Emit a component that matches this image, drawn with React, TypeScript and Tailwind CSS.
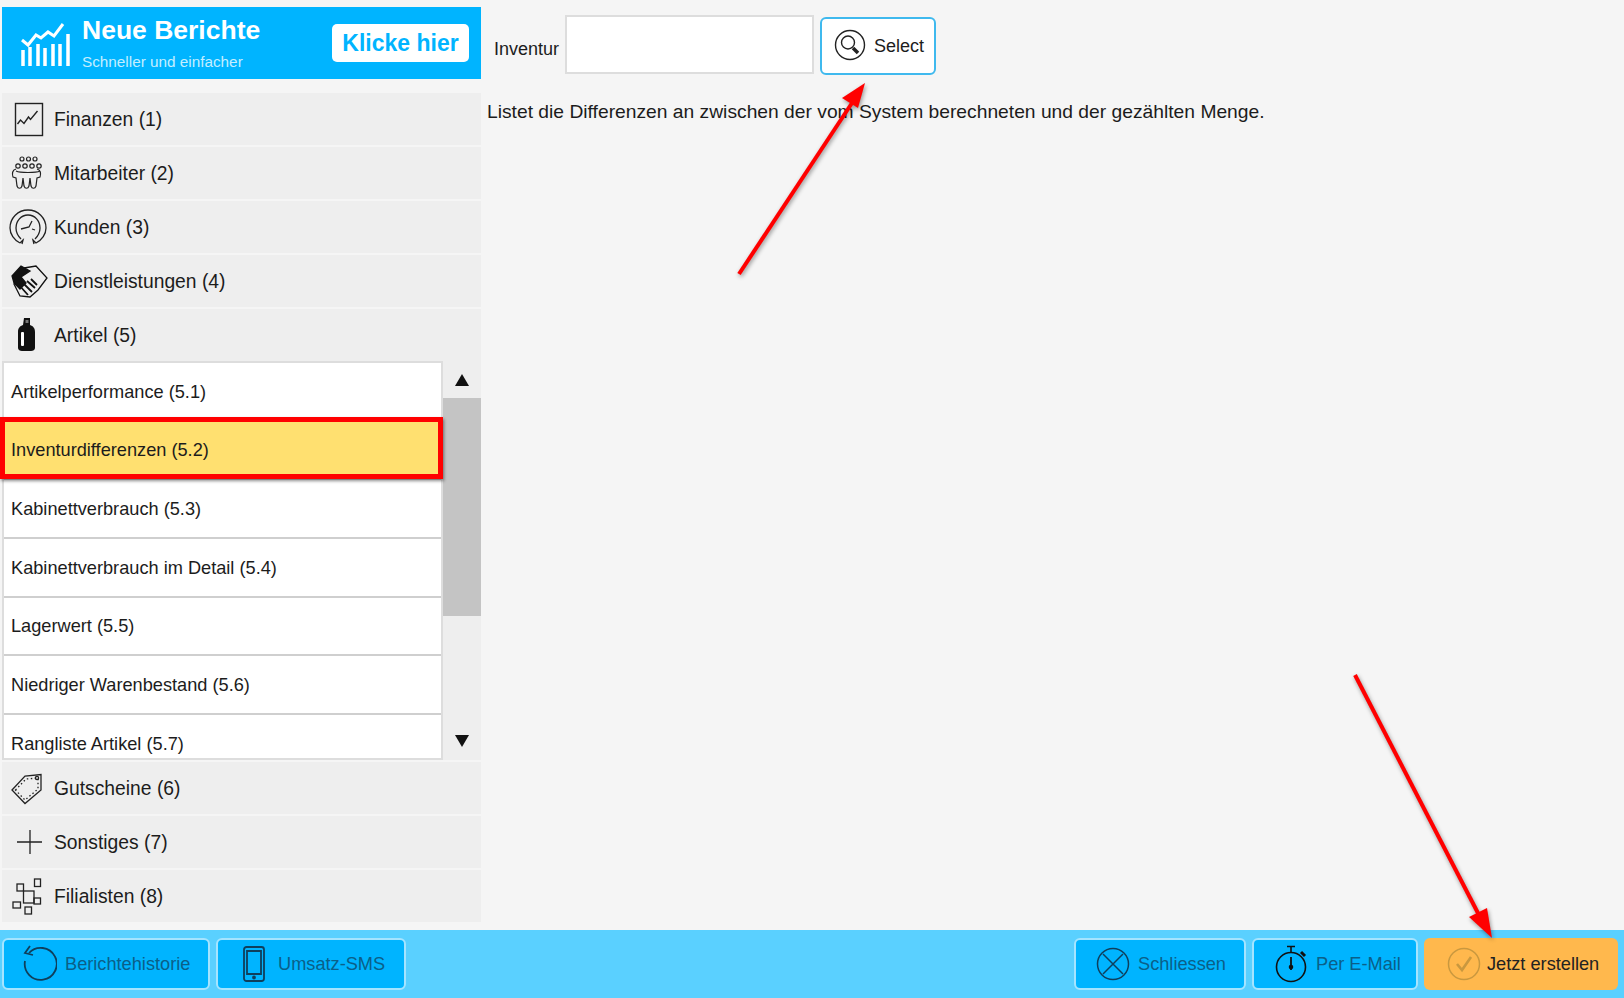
import type { ReactNode } from 'react'

const font = "[font-family:'Liberation_Sans',Arial,sans-serif]"

function FinanzenIcon() {
  return (
    <svg width="44" height="44" viewBox="0 0 44 44" fill="none" stroke="#222">
      <rect x="9.5" y="6.5" width="27" height="32" strokeWidth="1.4" />
      <path d="M11.5 27l3-4 3.5 3.5 4.5-6.5 2 2.5 7-8.5" strokeWidth="1.4" />
    </svg>
  )
}

function MitarbeiterIcon() {
  return (
    <svg width="44" height="44" viewBox="0 0 44 44" fill="none" stroke="#222" strokeWidth="1.2">
      <circle cx="16" cy="8" r="2" />
      <circle cx="22.5" cy="8" r="2" />
      <circle cx="29" cy="8" r="2" />
      <circle cx="12" cy="15" r="2.2" />
      <circle cx="19" cy="15" r="2.2" />
      <circle cx="26" cy="15" r="2.2" />
      <circle cx="33" cy="15" r="2.2" />
      <path d="M10 18c-4 1-4 5-3 8l3 1 1 8c1 3 4 3 5 0l1-8 1 8c1 3 4 3 5 0l1-8 1 8c1 3 4 3 5 0l1-8 3-1c1-3 1-7-3-8" />
      <path d="M10 20c4 2 20 2 24 0" />
    </svg>
  )
}

function KundenIcon() {
  return (
    <svg width="44" height="44" viewBox="0 0 44 44" fill="none" stroke="#222" strokeWidth="1.3">
      <path d="M14 38c-6-3-10-9-10-15C4 13 12 5 22 5s18 8 18 18c0 6-4 12-10 15l-3-3 1 4" />
      <path d="M14 38l3-3-1 4" />
      <path d="M15 34c-3-3-5-7-5-11 0-7 5-13 12-13s12 6 12 13c0 4-2 8-5 11" />
      <path d="M15 24l8-2 3-6M26 24l3 1" />
    </svg>
  )
}

function HandsIcon() {
  return (
    <svg width="44" height="44" viewBox="0 0 44 44" fill="none" stroke="#111" strokeWidth="1.3">
      <path d="M18 9l12-2 11 12-9 12-8 7-10-1-6-12z" />
      <path d="M6 17l9-10 9 5-9 6 5 6-6 6-6-6z" fill="#111" />
      <path d="M13 26l9 10M17 24l9 9M21 22l8 7M25 20l6 6" strokeWidth="1.8" />
    </svg>
  )
}

function BottleIcon() {
  return (
    <svg width="44" height="44" viewBox="0 0 44 44">
      <path d="M18 5h6v7c3 1 5 3 5 7v16c0 2-2 3-4 3h-9c-2 0-4-1-4-3V19c0-4 2-6 5-7z" fill="#111" />
      <rect x="15" y="19" width="3" height="14" rx="1" fill="#fff" />
      <rect x="19.5" y="7" width="3" height="3" fill="#777" />
    </svg>
  )
}

function TagIcon() {
  return (
    <svg width="44" height="44" viewBox="0 0 44 44" fill="none" stroke="#222" strokeWidth="1.3">
      <path d="M6 24L19 10l16-1.5V24L19 37.5z" />
      <path d="M9.5 24L20 13l12-1v11L19 34z" strokeDasharray="1.5 2.5" />
      <circle cx="31" cy="12" r="1.6" />
    </svg>
  )
}

function PlusIcon() {
  return (
    <svg width="44" height="44" viewBox="0 0 44 44" stroke="#222" strokeWidth="1.3">
      <path d="M11 22h25M24 10v24" />
    </svg>
  )
}

function BranchesIcon() {
  return (
    <svg width="44" height="44" viewBox="0 0 44 44" fill="none" stroke="#222" strokeWidth="1.3">
      <rect x="28.5" y="5" width="6" height="7.5" />
      <rect x="11" y="10" width="6.5" height="7" />
      <rect x="17.5" y="17" width="10.5" height="12" />
      <rect x="28" y="24" width="6.5" height="6" />
      <rect x="7" y="28" width="7.5" height="6" />
      <rect x="19" y="33" width="6.5" height="7" />
    </svg>
  )
}

function BannerIcon() {
  return (
    <svg width="52" height="46" viewBox="0 0 52 46" fill="none" stroke="#fff">
      <path d="M2 20l6 5 8-10 5 3 7-6 6 4 9-12" strokeWidth="3" />
      <path d="M3 46V30M10 46V27M18 46V24M25 46V28M33 46V24M40 46V24M48 46V14" strokeWidth="3.5" />
    </svg>
  )
}

function MenuRow({ icon, label }: { icon: ReactNode; label: string }) {
  return (
    <div className="flex h-[52px] items-center bg-[#eeeeee]">
      <div className="ml-[4px] mr-[4px] flex h-[44px] w-[44px] shrink-0">{icon}</div>
      <span className="pt-[2px] text-[19.3px] text-[#1c1c1c]">{label}</span>
    </div>
  )
}

function SubRow({ label, selected }: { label: string; selected?: boolean }) {
  return (
    <div
      className={`flex h-[58.7px] shrink-0 items-center border-b-2 border-[#cfcfcf] pl-[7px] pt-[2px] text-[18.2px] text-[#1c1c1c] ${
        selected ? 'bg-[#ffe070]' : 'bg-white'
      }`}
    >
      {label}
    </div>
  )
}

function FooterButton({ icon, label, className }: { icon: ReactNode; label: string; className: string }) {
  return (
    <button className={`flex h-[52px] items-center rounded-[6px] border-2 border-[#a5e4ff] bg-[#00b4ff] text-[18.2px] text-[#0b5f88] ${className}`}>
      {icon}
      <span className="pt-[2px]">{label}</span>
    </button>
  )
}

const subItems = [
  'Artikelperformance (5.1)',
  'Inventurdifferenzen (5.2)',
  'Kabinettverbrauch (5.3)',
  'Kabinettverbrauch im Detail (5.4)',
  'Lagerwert (5.5)',
  'Niedriger Warenbestand (5.6)',
  'Rangliste Artikel (5.7)',
]

export default function App() {
  return (
    <div className={`relative flex h-[998px] w-[1624px] flex-col overflow-hidden bg-[#f5f5f5] ${font}`}>
      <div className="flex h-[930px] shrink-0">
        {/* Sidebar */}
        <aside className="ml-[2px] w-[479px] shrink-0 pt-[7px]">
          <div className="flex h-[72px] items-center bg-[#00b4ff] pl-[18px] pr-[12px]">
            <BannerIcon />
            <div className="ml-[10px] flex-1 text-white">
              <div className="text-[26.5px] leading-[30px] font-bold">Neue Berichte</div>
              <div className="mt-[7px] text-[15.3px] leading-[20px] text-[#c4eeff]">Schneller und einfacher</div>
            </div>
            <div className="flex h-[38px] w-[137px] items-center justify-center rounded-[5px] bg-white text-[23px] font-bold text-[#00b4ff]">
              Klicke hier
            </div>
          </div>

          <div className="mt-[14px] flex flex-col gap-[2px]">
            <MenuRow icon={<FinanzenIcon />} label="Finanzen (1)" />
            <MenuRow icon={<MitarbeiterIcon />} label="Mitarbeiter (2)" />
            <MenuRow icon={<KundenIcon />} label="Kunden (3)" />
            <MenuRow icon={<HandsIcon />} label="Dienstleistungen (4)" />
            <MenuRow icon={<BottleIcon />} label="Artikel (5)" />
          </div>

          {/* Open group with its scrolling list */}
          <div className="relative flex h-[399px]">
            <div className="flex w-[441px] flex-col overflow-hidden border-2 border-[#dddddd] bg-white">
              {subItems.map((item) => (
                <SubRow key={item} label={item} selected={item.includes('5.2')} />
              ))}
            </div>
            <div className="flex w-[38px] flex-col items-center bg-[#eeeeee]">
              <div className="flex h-[37px] w-full items-center justify-center">
                <svg width="14" height="12" viewBox="0 0 14 12"><path d="M7 0l7 12H0z" fill="#111" /></svg>
              </div>
              <div className="h-[218px] w-full bg-[#c4c4c4]" />
              <div className="flex w-full flex-1 items-end justify-center pb-[13px]">
                <svg width="14" height="12" viewBox="0 0 14 12"><path d="M0 0h14L7 12z" fill="#111" /></svg>
              </div>
            </div>
            {/* Red annotation round the selected row */}
            <div className="absolute -left-[2px] top-[56px] h-[62px] w-[443px] border-[5px] border-[#ff0000] shadow-[1px_2px_3px_rgba(0,0,0,0.45)]" />
          </div>

          <div className="mt-[2px] flex flex-col gap-[2px]">
            <MenuRow icon={<TagIcon />} label="Gutscheine (6)" />
            <MenuRow icon={<PlusIcon />} label="Sonstiges (7)" />
            <MenuRow icon={<BranchesIcon />} label="Filialisten (8)" />
          </div>
        </aside>

        {/* Report parameters */}
        <main className="min-w-0 flex-1 pl-[6px] pt-[15px]">
          <div className="flex items-start pl-[7px]">
            <span className="mr-[6px] mt-[24px] text-[18px] leading-[20px] text-[#1c1c1c]">Inventur</span>
            <div className="h-[59px] w-[249px] border-2 border-[#dddddd] bg-white" />
            <button className="ml-[6px] mt-[2px] flex h-[58px] w-[116px] items-center rounded-[6px] border-2 border-[#3fb9ee] bg-white pl-[12px] text-[18px] text-[#1c1c1c]">
              <svg width="32" height="32" viewBox="0 0 32 32" fill="none" stroke="#222" className="mr-[8px] -mt-[2px]">
                <circle cx="16" cy="16" r="14.5" strokeWidth="1.4" />
                <circle cx="14" cy="13.5" r="6.5" strokeWidth="1.4" />
                <path d="M19 19l5 5" strokeWidth="3.5" />
              </svg>
              Select
            </button>
          </div>
          <p className="mt-[25px] text-[19.25px] leading-[24px] whitespace-nowrap text-[#1c1c1c]">
            Listet die Differenzen an zwischen der vom System berechneten und der gezählten Menge.
          </p>
        </main>
      </div>

      {/* Footer */}
      <footer className="flex h-[68px] items-center justify-between bg-[#5ad0ff] pl-[2px] pr-[6px]">
        <div className="flex gap-[6px]">
          <FooterButton
            className="w-[208px] pl-[17px]"
            label="Berichtehistorie"
            icon={
              <svg width="36" height="38" viewBox="0 0 36 38" fill="none" stroke="#0f3f5c" strokeWidth="1.8" className="mr-[8px]">
                <path d="M8 8a16 16 0 1 1-4 8" />
                <path d="M9 1L4 8l8 2" />
              </svg>
            }
          />
          <FooterButton
            className="w-[190px] pl-[25px]"
            label="Umsatz-SMS"
            icon={
              <svg width="22" height="36" viewBox="0 0 22 36" fill="none" stroke="#0f3f5c" strokeWidth="1.8" className="mr-[13px]">
                <rect x="1" y="1" width="20" height="34" rx="2.5" />
                <path d="M4 5h14v23H4z" />
                <circle cx="11" cy="31.5" r="1" fill="#0f3f5c" />
              </svg>
            }
          />
        </div>
        <div className="flex gap-[6px]">
          <FooterButton
            className="w-[172px] pl-[20px]"
            label="Schliessen"
            icon={
              <svg width="34" height="34" viewBox="0 0 34 34" fill="none" stroke="#0f3f5c" strokeWidth="1.5" className="mr-[8px]">
                <circle cx="17" cy="17" r="15.5" />
                <path d="M7 7l20 20M27 7L7 27" />
              </svg>
            }
          />
          <FooterButton
            className="w-[166px] pl-[21px]"
            label="Per E-Mail"
            icon={
              <svg width="34" height="38" viewBox="0 0 34 38" fill="none" stroke="#111" strokeWidth="1.6" className="mr-[7px]">
                <circle cx="16" cy="22" r="14.5" />
                <path d="M12 1.5h8M16 2v5" />
                <path d="M26 7l4 4" strokeWidth="3" />
                <path d="M16 12v13" strokeWidth="1.8" />
                <circle cx="16" cy="22" r="1.5" fill="#111" />
              </svg>
            }
          />
          <button className="flex h-[52px] w-[194px] items-center rounded-[6px] bg-[#ffb84d] pl-[23px] text-[18.2px] text-[#222]">
            <svg width="34" height="34" viewBox="0 0 34 34" fill="none" stroke="#c9983f" className="mr-[6px]">
              <circle cx="17" cy="17" r="15.5" strokeWidth="1.5" />
              <path d="M10 17l5 6 9-13" strokeWidth="2.6" />
            </svg>
            <span className="pt-[2px]">Jetzt erstellen</span>
          </button>
        </div>
      </footer>

      {/* Red annotation arrows */}
      <svg
        className="pointer-events-none absolute inset-0 drop-shadow-[1px_2px_2px_rgba(0,0,0,0.4)]"
        width="1624"
        height="998"
        viewBox="0 0 1624 998"
      >
        <path d="M739 274L852 103" stroke="#ff0000" strokeWidth="4" />
        <path d="M865 83L842 98L858 108z" fill="#ff0000" />
        <path d="M1355 675L1480 917" stroke="#ff0000" strokeWidth="4" />
        <path d="M1492 938L1469 917L1487 908z" fill="#ff0000" />
      </svg>
    </div>
  )
}
